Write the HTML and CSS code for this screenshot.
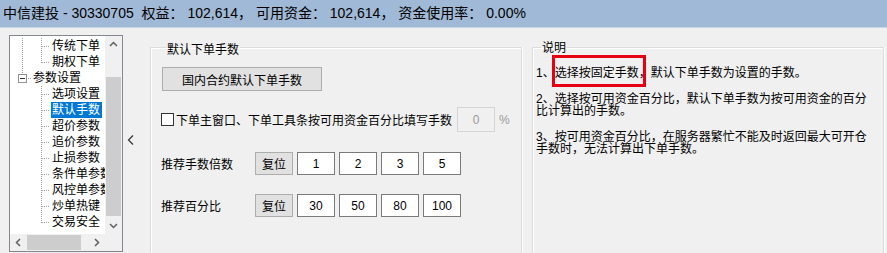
FILE: index.html
```html
<!DOCTYPE html>
<html lang="zh-CN">
<head>
<meta charset="utf-8">
<title>参数设置</title>
<link rel="stylesheet" href="styles.css">
</head>
<body>
<svg class="defs" width="0" height="0" aria-hidden="true">
  <defs>
    <symbol id="tA" viewBox="0 0 41 16">
      <line x1="12.5" y1="0" x2="12.5" y2="16" class="dot"/>
      <line x1="31.5" y1="0" x2="31.5" y2="16" class="dot"/>
      <line x1="32" y1="8.5" x2="40" y2="8.5" class="dot"/>
    </symbol>
    <symbol id="tB" viewBox="0 0 41 16">
      <line x1="12.5" y1="0" x2="12.5" y2="16" class="dot"/>
      <line x1="31.5" y1="0" x2="31.5" y2="9" class="dot"/>
      <line x1="32" y1="8.5" x2="40" y2="8.5" class="dot"/>
    </symbol>
    <symbol id="tC" viewBox="0 0 22 16">
      <line x1="12.5" y1="0" x2="12.5" y2="4" class="dot"/>
      <rect x="8.5" y="4.5" width="8" height="8" fill="#fff" stroke="#919191"/>
      <line x1="10" y1="8.5" x2="15" y2="8.5" stroke="#333"/>
      <line x1="18" y1="8.5" x2="22" y2="8.5" class="dot"/>
    </symbol>
    <symbol id="tD" viewBox="0 0 41 16">
      <line x1="31.5" y1="0" x2="31.5" y2="16" class="dot"/>
      <line x1="32" y1="8.5" x2="40" y2="8.5" class="dot"/>
    </symbol>
    <symbol id="tE" viewBox="0 0 41 16">
      <line x1="31.5" y1="0" x2="31.5" y2="9" class="dot"/>
      <line x1="32" y1="8.5" x2="40" y2="8.5" class="dot"/>
    </symbol>
  </defs>
</svg>

<div class="titlebar">中信建投 - 30330705&nbsp; 权益： 102,614， 可用资金： 102,614， 资金使用率： 0.00%</div>
<div class="titleline"></div>

<div class="window">
  <div class="tree">
    <div class="tree-top">
      <div class="tree-items">
        <div class="row"><svg class="g41"><use href="#tA"/></svg><span class="lbl">传统下单</span></div>
        <div class="row"><svg class="g41"><use href="#tB"/></svg><span class="lbl">期权下单</span></div>
        <div class="row"><svg class="g22"><use href="#tC"/></svg><span class="lbl">参数设置</span></div>
        <div class="row"><svg class="g41"><use href="#tD"/></svg><span class="lbl">选项设置</span></div>
        <div class="row"><svg class="g41"><use href="#tD"/></svg><span class="lbl sel">默认手数</span></div>
        <div class="row"><svg class="g41"><use href="#tD"/></svg><span class="lbl">超价参数</span></div>
        <div class="row"><svg class="g41"><use href="#tD"/></svg><span class="lbl">追价参数</span></div>
        <div class="row"><svg class="g41"><use href="#tD"/></svg><span class="lbl">止损参数</span></div>
        <div class="row"><svg class="g41"><use href="#tD"/></svg><span class="lbl">条件单参数</span></div>
        <div class="row"><svg class="g41"><use href="#tD"/></svg><span class="lbl">风控单参数</span></div>
        <div class="row"><svg class="g41"><use href="#tD"/></svg><span class="lbl">炒单热键</span></div>
        <div class="row"><svg class="g41"><use href="#tE"/></svg><span class="lbl">交易安全</span></div>
      </div>
      <div class="vscroll">
        <div class="sbtn"><svg width="17" height="17"><polyline points="5,10 8.5,6.5 12,10" class="chev"/></svg></div>
        <div class="vtrack"><div class="vthumb"></div></div>
        <div class="sbtn"><svg width="17" height="17"><polyline points="5,7 8.5,10.5 12,7" class="chev"/></svg></div>
      </div>
    </div>
    <div class="tree-bottom">
      <div class="hscroll">
        <div class="sbtn"><svg width="17" height="17"><polyline points="10,5 6.5,8.5 10,12" class="chev"/></svg></div>
        <div class="htrack"><div class="hthumb"></div></div>
        <div class="sbtn"><svg width="17" height="17"><polyline points="7,5 10.5,8.5 7,12" class="chev"/></svg></div>
      </div>
      <div class="corner"></div>
    </div>
  </div>

  <div class="collapse"><svg width="8" height="12"><polyline points="6,1.5 1.5,6 6,10.5" fill="none" stroke="#333" stroke-width="1.2"/></svg></div>

  <fieldset class="group main">
    <legend>默认下单手数</legend>
    <button class="btn wide">国内合约默认下单手数</button>
    <div class="chkrow">
      <span class="chk"></span>
      <span class="chktext">下单主窗口、下单工具条按可用资金百分比填写手数</span>
      <span class="field disabled">0</span>
      <span class="pct">%</span>
    </div>
    <div class="preset first">
      <span class="plabel">推荐手数倍数</span>
      <button class="btn small">复位</button>
      <span class="field">1</span>
      <span class="field">2</span>
      <span class="field">3</span>
      <span class="field">5</span>
    </div>
    <div class="preset">
      <span class="plabel">推荐百分比</span>
      <button class="btn small">复位</button>
      <span class="field">30</span>
      <span class="field">50</span>
      <span class="field">80</span>
      <span class="field">100</span>
    </div>
  </fieldset>

  <fieldset class="group note">
    <legend>说明</legend>
    <div class="notes">
      <p>1、<span class="hl">选择按固定手数</span>，默认下单手数为设置的手数。</p>
      <p>2、选择按可用资金百分比，默认下单手数为按可用资金的百分比计算出的手数。</p>
      <p>3、按可用资金百分比，在服务器繁忙不能及时返回最大可开仓手数时，无法计算出下单手数。</p>
    </div>
  </fieldset>
</div>
</body>
</html>
```

FILE: styles.css
```css
* { box-sizing: border-box; }
html, body {
  margin: 0;
  padding: 0;
  width: 887px;
  height: 253px;
  overflow: hidden;
  background: #f0f0f0;
  font-family: "Liberation Sans", "Noto Sans CJK SC", sans-serif;
  font-size: 12px;
  color: #000;
}
.defs { position: absolute; width: 0; height: 0; overflow: hidden; }
.dot { stroke: #a0a0a0; stroke-dasharray: 1 1; shape-rendering: crispEdges; }
.chev { fill: none; stroke: #606060; stroke-width: 1.5; }

.titlebar {
  height: 27px;
  background: #a0b9d6;
  font-size: 14px;
  line-height: 27px;
  padding-left: 3px;
  white-space: nowrap;
  color: #000;
}
.titleline { height: 1px; background: #c9d7e7; }

.window {
  display: flex;
  align-items: flex-start;
  height: 225px;
}

/* tree */
.tree {
  margin: 7px 0 0 9px;
  width: 114px;
  height: 217px;
  border: 1px solid #828790;
  background: #fff;
  display: flex;
  flex-direction: column;
}
.tree-top { flex: 1; display: flex; min-height: 0; }
.tree-items {
  flex: 1;
  overflow: hidden;
  padding-top: 2px;
}
.row {
  display: flex;
  height: 16px;
  align-items: center;
  white-space: nowrap;
}
.row svg { flex: none; height: 16px; }
.g41 { width: 41px; }
.g22 { width: 22px; }
.lbl {
  line-height: 16px;
  height: 16px;
  padding: 0 2px 0 1px;
}
.lbl.sel { background: #0078d7; color: #fff; }

.vscroll {
  width: 17px;
  background: #f0f0f0;
  display: flex;
  flex-direction: column;
}
.sbtn { width: 17px; height: 17px; flex: none; }
.sbtn svg { display: block; }
.vtrack { flex: 1; padding-top: 24px; padding-bottom: 1px; display: flex; flex-direction: column; }
.vthumb { width: 15px; height: 139px; margin-left: 1px; background: #cdcdcd; }
.tree-bottom { height: 17px; display: flex; flex: none; }
.hscroll { flex: 1; display: flex; background: #f0f0f0; }
.htrack { flex: 1; display: flex; align-items: center; }
.hthumb { width: 54px; height: 15px; background: #cdcdcd; }
.corner { width: 17px; background: #f0f0f0; }

.collapse {
  width: 27px;
  align-self: stretch;
  display: flex;
  align-items: center;
  padding-left: 4px;
  padding-bottom: 2px;
}

/* group boxes */
.group {
  padding: 0;
  border: 1px solid #dcdcdc;
  border-bottom: 0;
  box-shadow: inset 1px 1px 0 #fff, 1px 0 0 #fff;
  min-width: 0;
}
.group legend {
  font-size: 12px;
  line-height: 14px;
  padding: 0 1px;
  margin-left: 5px;
}
.main {
  width: 372px;
  height: 215px;
  margin: 10px 0 0 0;
  padding-left: 10px;
}
.main legend { padding-top: 5px; }
.note {
  width: 352px;
  height: 214px;
  margin: 11px 0 0 10px;
  padding-left: 3px;
}
.note legend { padding-top: 2px; }

.btn {
  font-family: inherit;
  font-size: 12px;
  background: #e1e1e1;
  border: 1px solid #adadad;
  padding: 0;
  margin: 0;
  color: #000;
  display: flex;
  align-items: center;
  justify-content: center;
}
.btn.wide { width: 160px; height: 24px; margin: 10px 0 0 1px; }
.btn.small { width: 38px; height: 23px; }

.chkrow {
  display: flex;
  align-items: center;
  height: 25px;
  margin-top: 16px;
}
.chk {
  width: 13px;
  height: 13px;
  border: 1px solid #333;
  background: #fff;
  margin-right: 2px;
}
.chktext { margin-right: 5px; white-space: nowrap; }
.field {
  width: 38px;
  height: 23px;
  border: 1px solid #7a7a7a;
  background: #fff;
  display: flex;
  align-items: center;
  justify-content: center;
  font-size: 12px;
}
.field.disabled {
  height: 25px;
  border-color: #d4d4d4;
  background: #f0f0f0;
  color: #9a9a9a;
}
.pct { color: #9a9a9a; margin-left: 4px; }

.preset {
  display: flex;
  align-items: center;
  gap: 4px;
  margin-top: 19px;
}
.preset.first { margin-top: 20px; }
.plabel { width: 90px; }

.notes { width: 336px; margin-top: 12px; }
.notes p { margin: 0 0 14px 0; line-height: 12px; }
.hl {
  display: inline-block;
  position: relative;
  line-height: 12px;
  height: 12px;
}
.hl::after {
  content: "";
  position: absolute;
  left: -3px;
  right: -7px;
  top: -12px;
  bottom: -8px;
  border: 3px solid #e60012;
}
```
